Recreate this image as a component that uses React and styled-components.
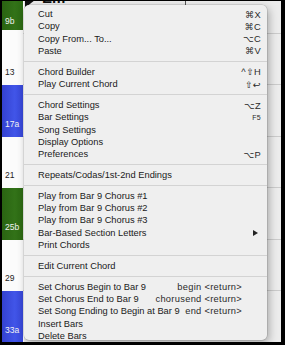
import React from 'react';
import styled, { createGlobalStyle } from 'styled-components';

const Global = createGlobalStyle`
  html, body { margin: 0; padding: 0; background: #000; }
  body { font-family: "Liberation Sans", Arial, "DejaVu Sans", sans-serif; }
`;

const Frame = styled.div`
  position: relative;
  width: 285px;
  height: 345px;
  box-sizing: border-box;
  border-style: solid;
  border-color: #000;
  border-width: 1px 4px 3px 2px;
  overflow: hidden;
  background: #e8e8e8;
`;

const Sheet = styled.div`
  display: flex;
  flex-direction: column;
  margin-top: -19px;
`;

const Row = styled.div`
  display: flex;
  height: 51.5px;
  flex-shrink: 0;
  background: #fbfbfb;
`;

const cellColors = {
  green: 'linear-gradient(90deg, #2a6412 0%, #327218 60%, #2c6913 100%)',
  blue: 'linear-gradient(90deg, #3441d0 0%, #4155e8 60%, #3747d8 100%)',
  white: '#fbfbfb',
};

const Cell = styled.div`
  width: 21px;
  box-sizing: border-box;
  display: flex;
  flex-direction: column;
  justify-content: flex-end;
  padding: 0 0 ${p => (p.$short ? '4px' : '8px')} 3px;
  margin-bottom: ${p => (p.$short ? '4px' : '0')};
  background: ${p => cellColors[p.$tone]};
  color: ${p => (p.$tone === 'white' ? '#222' : '#f2f2f2')};
  font-size: 8.5px;
  line-height: 10px;
`;

const BarArea = styled.div`
  flex: 1;
  display: flex;
  align-items: flex-start;
  border-left: 1px solid #fff;
  border-bottom: 1px solid #cbcbcb;
  background: #ececec;
`;

const Marker = styled.svg`
  margin: 18px 0 0 1px;
  flex-shrink: 0;
`;

const Chord = styled.div`
  margin: 8px 0 0 7px;
  font-size: 15px;
  line-height: 15px;
  font-weight: bold;
  color: #111;
`;

const Tick = styled.div`
  margin: 18px 0 0 120px;
  width: 1px;
  height: 6px;
  background: #555;
`;

const Menu = styled.div`
  position: absolute;
  top: 4px;
  left: 22px;
  width: 243px;
  height: 335px;
  box-sizing: border-box;
  padding: 3px 0 2px;
  background: #efefef;
  border-radius: 5px;
  box-shadow: 0 0 0 0.5px rgba(0, 0, 0, 0.18), 2px 3px 8px rgba(0, 0, 0, 0.3);
  display: flex;
  flex-direction: column;
`;

const Item = styled.div`
  display: flex;
  align-items: center;
  justify-content: space-between;
  height: 12.25px;
  flex-shrink: 0;
  padding: 0 6px 0 14px;
  font-size: 9.3px;
  color: #1a1a1a;
  white-space: nowrap;
`;

const Shortcut = styled.span`
  font-size: ${p => (p.$small ? '7px' : '9.3px')};
  color: #2a2a2a;
  margin-right: ${p => (p.$inset ? '19px' : '0')};
  letter-spacing: 0.3px;
`;

const Arrow = styled.svg`
  margin-right: 3px;
`;

const Separator = styled.div`
  height: 1px;
  flex-shrink: 0;
  margin: 4px 0 3.7px;
  background: #d3d3d3;
`;

const sections = [
  [
    ['Cut', '⌘X'],
    ['Copy', '⌘C'],
    ['Copy From... To...', '⌥C'],
    ['Paste', '⌘V'],
  ],
  [
    ['Chord Builder', '^⇧H'],
    ['Play Current Chord', '⇧↩'],
  ],
  [
    ['Chord Settings', '⌥Z'],
    ['Bar Settings', 'F5', 'small'],
    ['Song Settings'],
    ['Display Options'],
    ['Preferences', '⌥P'],
  ],
  [['Repeats/Codas/1st-2nd Endings']],
  [
    ['Play from Bar 9 Chorus #1'],
    ['Play from Bar 9 Chorus #2'],
    ['Play from Bar 9 Chorus #3'],
    ['Bar-Based Section Letters', null, 'sub'],
    ['Print Chords'],
  ],
  [['Edit Current Chord']],
  [
    ['Set Chorus Begin to Bar 9', 'begin <return>', 'inset'],
    ['Set Chorus End to Bar 9', 'chorusend <return>', 'inset'],
    ['Set Song Ending to Begin at Bar 9', 'end <return>', 'inset'],
    ['Insert Bars'],
    ['Delete Bars'],
  ],
];

const rows = [
  { tone: 'green', label: '9b', top: true },
  { tone: 'white', label: '13' },
  { tone: 'blue', label: '17a' },
  { tone: 'white', label: '21' },
  { tone: 'green', label: '25b' },
  { tone: 'white', label: '29' },
  { tone: 'blue', label: '33a' },
];

function MenuItem({ label, shortcut, kind }) {
  return (
    <Item>
      <span>{label}</span>
      {kind === 'sub' ? (
        <Arrow width="5" height="6" viewBox="0 0 5 6">
          <polygon points="0,0 5,3 0,6" fill="#222" />
        </Arrow>
      ) : shortcut ? (
        <Shortcut $small={kind === 'small'} $inset={kind === 'inset'}>
          {shortcut}
        </Shortcut>
      ) : null}
    </Item>
  );
}

export default function App() {
  return (
    <>
      <Global />
      <Frame>
        <Sheet>
          {rows.map((r, i) => (
            <Row key={i}>
              <Cell $tone={r.tone} $short={r.top}>{r.label}</Cell>
              <BarArea>
                {r.top && (
                  <>
                    <Marker width="10" height="7" viewBox="0 0 10 7">
                      <polygon points="0,0 10,0 1,7 0,7" fill="#111" />
                    </Marker>
                    <Chord>Em</Chord>
                    <Tick />
                  </>
                )}
              </BarArea>
            </Row>
          ))}
        </Sheet>
        <Menu>
          {sections.map((sec, si) => (
            <React.Fragment key={si}>
              {si > 0 && <Separator />}
              {sec.map(([label, sc, kind]) => (
                <MenuItem key={label} label={label} shortcut={sc} kind={kind} />
              ))}
            </React.Fragment>
          ))}
        </Menu>
      </Frame>
    </>
  );
}
